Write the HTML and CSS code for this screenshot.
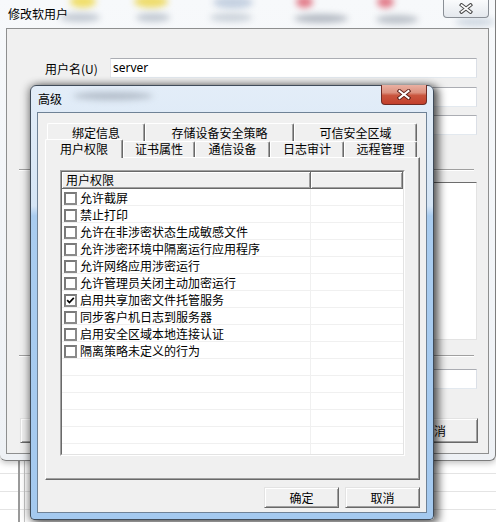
FILE: index.html
```html
<!DOCTYPE html>
<html>
<head>
    <meta charset="UTF-8">
    <title>高级</title>
    <link rel="stylesheet" href="styles.css">
</head>
<body>
    <div class="main-win">
        <div class="main-titlebar">
            <span class="blob b-y1"></span>
            <span class="blob b-g1"></span>
            <span class="blob b-y2"></span>
            <span class="blob b-g2"></span>
            <span class="blob b-b3"></span>
            <span class="blob b-g3"></span>
            <span class="blob b-r4"></span>
            <span class="blob b-g4"></span>
            <span class="blob b-r5"></span>
            <span class="blob b-g5"></span>
            <span class="blob b-g6"></span>
            <span class="main-title">修改软用户</span>
            <div class="main-close">
                <svg width="14" height="11" viewBox="0 0 14 11">
                    <path d="M2.5 2 L11.5 9 M11.5 2 L2.5 9" stroke="#4b4b4b" stroke-width="3.6" stroke-linecap="square" fill="none"/>
                    <path d="M2.5 2 L11.5 9 M11.5 2 L2.5 9" stroke="#fff" stroke-width="1.6" stroke-linecap="square" fill="none"/>
                </svg>
            </div>
        </div>
        <div class="main-body">
            <div class="form-row">
                <span class="field-label">用户名(U)</span>
                <div class="textbox">server</div>
            </div>
            <div class="form-row row-2">
                <span class="field-label"></span>
                <div class="textbox"></div>
            </div>
            <div class="form-row row-3">
                <span class="field-label"></span>
                <div class="textbox"></div>
            </div>
            <div class="separator"></div>
            <div class="form-row row-list">
                <span class="field-label"></span>
                <div class="main-listbox"></div>
            </div>
            <div class="separator sep-2"></div>
            <div class="form-row row-last">
                <span class="field-label"></span>
                <div class="textbox"></div>
            </div>
            <div class="main-buttons">
                <button class="btn main-btn">确定</button>
                <button class="btn main-btn">取消</button>
            </div>
        </div>
    </div>

    <div class="dialog">
        <div class="dlg-titlebar">
            <span class="blob b-d1"></span>
            <span class="dlg-title">高级</span>
            <div class="dlg-close">
                <svg width="14" height="11" viewBox="0 0 14 11">
                    <path d="M2.5 2 L11.5 9 M11.5 2 L2.5 9" stroke="#5b1d16" stroke-width="3.8" stroke-linecap="square" fill="none"/>
                    <path d="M2.5 2 L11.5 9 M11.5 2 L2.5 9" stroke="#fff" stroke-width="2" stroke-linecap="square" fill="none"/>
                </svg>
            </div>
        </div>
        <div class="dlg-client">
            <div class="tab-row top-row">
                <div class="tab w-bind">绑定信息</div>
                <div class="tab w-storage">存储设备安全策略</div>
                <div class="tab w-trust">可信安全区域</div>
            </div>
            <div class="tab-row bottom-row">
                <div class="tab active w-user">用户权限</div>
                <div class="tab w-cert">证书属性</div>
                <div class="tab w-comm">通信设备</div>
                <div class="tab w-log">日志审计</div>
                <div class="tab w-remote">远程管理</div>
            </div>
            <div class="tab-panel">
                <div class="list-outer">
                    <div class="list-inner">
                        <div class="list-head">
                            <div class="hcell c1">用户权限</div>
                            <div class="hcell c2"></div>
                        </div>
                        <div class="list-row"><div class="cell c1"><span class="check"></span><span class="item-text">允许截屏</span></div><div class="cell c2"></div></div>
                        <div class="list-row"><div class="cell c1"><span class="check"></span><span class="item-text">禁止打印</span></div><div class="cell c2"></div></div>
                        <div class="list-row"><div class="cell c1"><span class="check"></span><span class="item-text">允许在非涉密状态生成敏感文件</span></div><div class="cell c2"></div></div>
                        <div class="list-row"><div class="cell c1"><span class="check"></span><span class="item-text">允许涉密环境中隔离运行应用程序</span></div><div class="cell c2"></div></div>
                        <div class="list-row"><div class="cell c1"><span class="check"></span><span class="item-text">允许网络应用涉密运行</span></div><div class="cell c2"></div></div>
                        <div class="list-row"><div class="cell c1"><span class="check"></span><span class="item-text">允许管理员关闭主动加密运行</span></div><div class="cell c2"></div></div>
                        <div class="list-row"><div class="cell c1"><span class="check"><svg width="9" height="9" viewBox="0 0 9 9"><path d="M1.2 4.2 L3.4 6.5 L7.8 1.8" stroke="#000" stroke-width="1.7" fill="none"/></svg></span><span class="item-text">启用共享加密文件托管服务</span></div><div class="cell c2"></div></div>
                        <div class="list-row"><div class="cell c1"><span class="check"></span><span class="item-text">同步客户机日志到服务器</span></div><div class="cell c2"></div></div>
                        <div class="list-row"><div class="cell c1"><span class="check"></span><span class="item-text">启用安全区域本地连接认证</span></div><div class="cell c2"></div></div>
                        <div class="list-row"><div class="cell c1"><span class="check"></span><span class="item-text">隔离策略未定义的行为</span></div><div class="cell c2"></div></div>
                        <div class="list-row"><div class="cell c1"></div><div class="cell c2"></div></div>
                        <div class="list-row"><div class="cell c1"></div><div class="cell c2"></div></div>
                        <div class="list-row"><div class="cell c1"></div><div class="cell c2"></div></div>
                        <div class="list-row"><div class="cell c1"></div><div class="cell c2"></div></div>
                        <div class="list-row"><div class="cell c1"></div><div class="cell c2"></div></div>
                        <div class="list-row"><div class="cell c1"></div><div class="cell c2"></div></div>
                    </div>
                </div>
            </div>
            <div class="dlg-buttons">
                <button class="btn">确定</button>
                <button class="btn">取消</button>
            </div>
        </div>
    </div>
</body>
</html>
```

FILE: styles.css
```css
body {
    margin: 0;
    width: 496px;
    height: 522px;
    overflow: hidden;
    position: relative;
    font-family: "Noto Sans CJK SC", "Noto Sans", sans-serif;
    font-size: 12px;
    color: #000;
    background-color: #fff;
    background-image:
        linear-gradient(to right, transparent 18px, #9a9a9a 18px, #9a9a9a 20px, transparent 20px, transparent 24px, #c4c4c4 24px, #c4c4c4 25px, transparent 25px),
        repeating-linear-gradient(to bottom, transparent 0, transparent 17px, #e4e4e4 17px, #e4e4e4 18px);
    background-position: 0 0, 0 6px;
}

/* background window */
.main-win {
    position: absolute;
    left: 0;
    top: 0;
    width: 496px;
    height: 461px;
    box-sizing: border-box;
    border-right: 1px solid #7d7d7d;
    border-bottom: 1px solid #7d7d7d;
    border-radius: 0 0 6px 6px;
    background: linear-gradient(#f7f9fb, #eef1f5);
    box-shadow: 0 2px 6px rgba(0,0,0,0.25);
}
.main-titlebar {
    position: relative;
    height: 28px;
    display: flex;
    align-items: flex-start;
    padding: 0 6px 0 8px;
    overflow: hidden;
}
.main-title {
    position: relative;
    margin-top: 5px;
    line-height: 17px;
}
.main-close {
    position: relative;
    margin-left: auto;
    margin-top: -1px;
    width: 46px;
    height: 19px;
    box-sizing: border-box;
    border: 1px solid #8a8f96;
    border-top: none;
    border-radius: 0 0 4px 4px;
    background: linear-gradient(#fbfcfd, #e4e8ed);
    display: flex;
    align-items: center;
    justify-content: center;
}
.blob {
    position: absolute;
    border-radius: 50%;
    filter: blur(3px);
}
.b-y1 { left: 70px; top: -5px; width: 26px; height: 13px; background: #f0de6a; }
.b-g1 { left: 60px; top: 13px; width: 40px; height: 9px; background: #c3cad3; }
.b-y2 { left: 134px; top: -5px; width: 34px; height: 13px; background: #eedc6c; }
.b-g2 { left: 136px; top: 13px; width: 34px; height: 9px; background: #c3cad3; }
.b-b3 { left: 213px; top: -4px; width: 40px; height: 13px; background: #c5d1e1; }
.b-g3 { left: 210px; top: 13px; width: 42px; height: 9px; background: #ccd3db; }
.b-r4 { left: 296px; top: -4px; width: 17px; height: 12px; background: #e27c8a; }
.b-g4 { left: 294px; top: 14px; width: 54px; height: 9px; background: #b5bbc4; }
.b-r5 { left: 377px; top: -4px; width: 17px; height: 12px; background: #e27c8a; }
.b-g5 { left: 376px; top: 15px; width: 42px; height: 9px; background: #bcc2ca; }
.b-g6 { left: 455px; top: 18px; width: 40px; height: 8px; background: #cdd6e0; }

.main-body {
    margin: 0 6px;
    height: 426px;
    box-sizing: border-box;
    border: 1px solid #8e8f8f;
    background: #f0f0f0;
    padding-top: 29px;
}
.form-row {
    display: flex;
    align-items: center;
    padding-left: 38px;
}
.field-label {
    width: 65px;
    flex: none;
}
.textbox {
    width: 367px;
    height: 20px;
    box-sizing: border-box;
    border: 1px solid;
    border-color: #abadb3 #dbdfe6 #e3e9ef #e2e3ea;
    background: #fff;
    padding-left: 2px;
    line-height: 18px;
    font-family: "Noto Sans", sans-serif;
}
.row-2 { margin-top: 9px; }
.row-3 { margin-top: 8px; }
.separator {
    height: 1px;
    margin: 34px 14px 0 12px;
    background: #a0a0a0;
    box-shadow: 0 1px #fff;
}
.row-list { margin-top: 12px; }
.main-listbox {
    width: 367px;
    height: 158px;
    box-sizing: border-box;
    border: 1px solid;
    border-color: #6d6d6d #e3e3e3 #e3e3e3 #a0a0a0;
    background: #fff;
}
.sep-2 { margin-top: 15px; }
.row-last { margin-top: 13px; }
.main-buttons {
    display: flex;
    justify-content: space-between;
    margin: 29px 10px 0 13px;
}
.btn {
    font: inherit;
    width: 75px;
    height: 21px;
    padding: 0;
    color: #000;
    background: #f0f0f0;
    border: 1px solid;
    border-color: #e3e3e3 #696969 #696969 #e3e3e3;
    box-shadow: inset 1px 1px #fff, inset -1px -1px #a0a0a0;
    line-height: 17px;
}
.main-btn {
    width: 88px;
    height: 25px;
}

/* dialog */
.dialog {
    position: absolute;
    left: 30px;
    top: 85px;
    width: 404px;
    height: 435px;
    box-sizing: border-box;
    border: 1px solid #404c5a;
    border-radius: 6px 6px 4px 4px;
    padding: 0 6px 6px;
    background: linear-gradient(to bottom, #e3edf8 0, #d5e5f5 120px, #a9ccef 130px, #a4c9ef 100%);
    box-shadow: 4px 2px 9px 1px rgba(0,0,0,0.6), -2px 0 8px rgba(0,0,0,0.3);
}
.dlg-titlebar {
    position: relative;
    height: 26px;
    display: flex;
    align-items: flex-start;
}
.b-d1 { left: 36px; top: 6px; width: 80px; height: 8px; background: #b3bdc9; }
.dlg-title {
    position: relative;
    margin: 4px 0 0 1px;
    line-height: 17px;
}
.dlg-close {
    position: relative;
    margin-left: auto;
    margin-top: -1px;
    width: 46px;
    height: 20px;
    box-sizing: border-box;
    border: 1px solid #6e2b24;
    border-top: none;
    border-radius: 0 0 4px 4px;
    background: linear-gradient(#eab0a2 0, #dc917f 40%, #c9553e 55%, #c3402c 100%);
    display: flex;
    align-items: center;
    justify-content: center;
}
.dlg-client {
    height: 401px;
    box-sizing: border-box;
    border: 1px solid #6f8296;
    background: #f0f0f0;
    padding: 10px 6px 0 7px;
}

/* tabs */
.tab-row {
    display: flex;
    align-items: flex-start;
}
.top-row {
    height: 18px;
    margin-left: 2px;
}
.bottom-row {
    height: 18px;
    margin-top: -2px;
}
.tab {
    box-sizing: border-box;
    height: 18px;
    padding-top: 2px;
    line-height: 14px;
    text-align: center;
    white-space: nowrap;
    background: #f0f0f0;
    border-top: 1px solid #fff;
    border-left: 1px solid #fff;
    border-right: 1px solid #696969;
    border-radius: 2px 2px 0 0;
    box-shadow: inset -1px 0 #a0a0a0;
}
.bottom-row .tab {
    margin-top: 2px;
    height: 16px;
    padding-top: 0;
}
.bottom-row .tab.active {
    position: relative;
    z-index: 1;
    margin-top: 0;
    height: 19px;
    padding-top: 2px;
}
.w-bind { width: 98px; }
.w-storage { width: 149px; }
.w-trust { width: 123px; }
.w-user { width: 78px; }
.w-cert { width: 72px; }
.w-comm { width: 75px; }
.w-log { width: 74px; }
.w-remote { width: 73px; }

.tab-panel {
    box-sizing: border-box;
    width: 375px;
    height: 323px;
    border: 1px solid;
    border-color: #fff #696969 #696969 #fff;
    box-shadow: inset -1px -1px #a0a0a0;
    padding: 12px 0 0 14px;
}

/* list view */
.list-outer {
    width: 345px;
    height: 286px;
    box-sizing: border-box;
    border: 1px solid;
    border-color: #a0a0a0 #fff #fff #a0a0a0;
}
.list-inner {
    height: 100%;
    box-sizing: border-box;
    border: 1px solid;
    border-color: #696969 #e3e3e3 #e3e3e3 #696969;
    background: #fff;
    overflow: hidden;
}
.list-head {
    display: flex;
    height: 17px;
}
.hcell {
    box-sizing: border-box;
    height: 17px;
    line-height: 16px;
    padding-left: 4px;
    background: #f0f0f0;
    border-right: 1px solid #696969;
    border-bottom: 1px solid #696969;
    box-shadow: inset 1px 1px #fff, inset -1px -1px #a0a0a0;
}
.c1 {
    width: 249px;
    flex: none;
}
.c2 {
    flex: 1;
}
.list-row {
    display: flex;
    height: 17px;
    box-sizing: border-box;
    border-bottom: 1px solid #f0f0f0;
}
.cell {
    box-sizing: border-box;
    height: 16px;
    display: flex;
    align-items: flex-start;
    white-space: nowrap;
}
.cell.c1 {
    padding-left: 2px;
    border-right: 1px solid #f0f0f0;
}
.check {
    flex: none;
    width: 13px;
    height: 13px;
    margin: 3px 3px 0 0;
    box-sizing: border-box;
    border: 2px solid #8b8b8b;
    border-top-color: #7a7a7a;
    border-left-color: #7a7a7a;
    background: #fff;
    display: flex;
    align-items: center;
    justify-content: center;
}
.item-text {
    margin-top: 1px;
    line-height: 15px;
}

.dlg-buttons {
    display: flex;
    justify-content: flex-end;
    gap: 6px;
    margin-top: 7px;
}
```
